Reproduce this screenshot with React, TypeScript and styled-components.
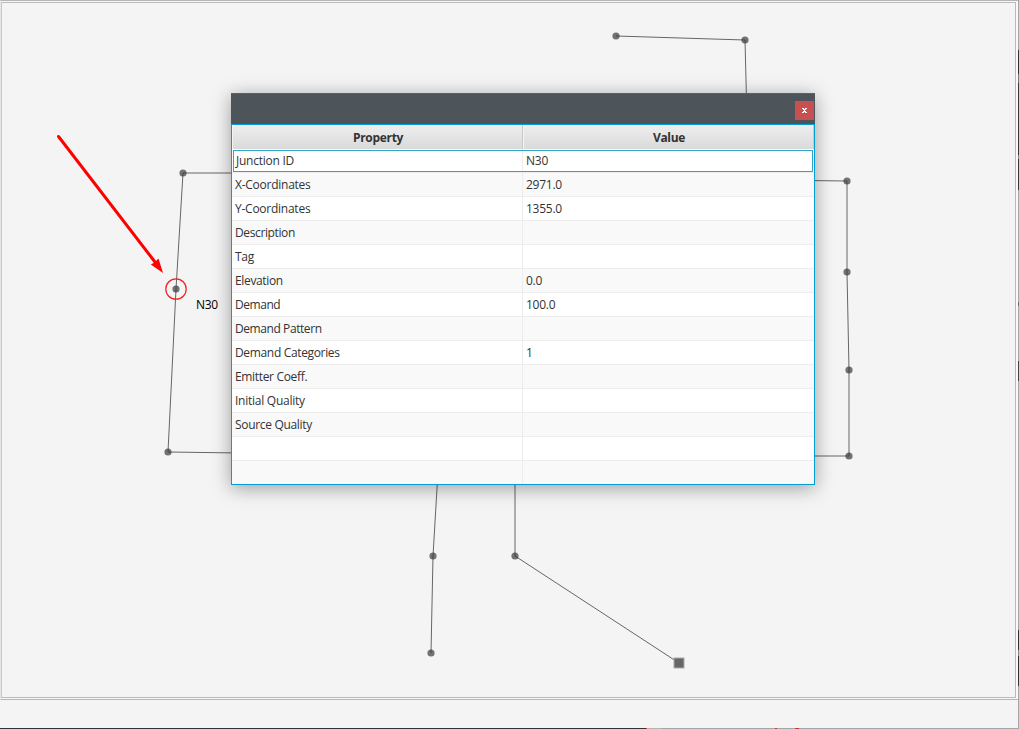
import React from "react";
import styled, { createGlobalStyle } from "styled-components";

const GlobalStyle = createGlobalStyle`
  * { box-sizing: border-box; }
  html, body { margin: 0; padding: 0; overflow: hidden; }
  body { background: #f4f4f4; font-family: "Open Sans", "Noto Sans", sans-serif; font-size: 12px; color: #333; }
`;

const Screen = styled.div`
  position: relative;
  width: 1019px;
  height: 729px;
  display: grid;
  grid-template-columns: 1fr 1px;
  grid-template-rows: 1fr 1px;
  background: #f4f4f4;
`;

const Workspace = styled.div`
  display: flex;
  flex-direction: column;
  min-width: 0;
`;

const CanvasFrame = styled.div`
  height: 700px;
  border-top: 1px solid #b5b5b5;
  border-bottom: 1px solid #b5b5b5;
  border-left: 1px solid #e6e6e6;
  padding: 1px 2px 1px 0;
  background: #f8f8f8;
`;

const Canvas = styled.div`
  height: 100%;
  border: 1px solid #bababa;
  border-left-color: #c8c8c8;
  background: #f4f4f4;
`;

const RightEdge = styled.div`
  background: linear-gradient(
    #a5a5a5 50px, #333 50px 74px, #777 74px 83px, #383838 83px 155px,
    #858585 155px 159px, #383838 159px 190px, #a5a5a5 190px 302px,
    #707070 302px 306px, #a5a5a5 306px 361px, #444 361px 381px,
    #a5a5a5 381px 630px, #333 630px 650px, #888 650px 656px,
    #333 656px 686px, #a5a5a5 686px
  );
`;

const BottomEdge = styled.div`
  grid-column: 1 / 3;
  background: linear-gradient(
    90deg, #333 646px, #d33 646px 647px, #b5b5b0 647px 661px, #a5a5a5 661px 775px,
    #c43b36 775px 777px, #a5a5a5 777px 795px, #c43b36 795px 799px, #a5a5a5 799px
  );
`;

const Network = styled.svg`
  position: absolute;
  inset: 0;
`;

const NodeLabel = styled.span`
  position: absolute;
  left: 196px;
  top: 297px;
  line-height: 16px;
  letter-spacing: -0.35px;
  color: #000;
`;

const Dialog = styled.section`
  position: absolute;
  left: 231px;
  top: 93px;
  width: 584px;
  height: 392px;
  display: flex;
  flex-direction: column;
  box-shadow: 0 3px 18px rgba(0, 0, 0, 0.36);
`;

const TitleBar = styled.header`
  height: 31px;
  flex: none;
  display: flex;
  justify-content: flex-end;
  padding: 7px 1px 0 0;
  background: #4d545a;
  border-top: 1px solid #596066;
`;

const CloseButton = styled.button`
  display: flex;
  align-items: center;
  justify-content: center;
  width: 19px;
  height: 19px;
  padding: 0;
  border: 0;
  background: #c75050;
`;

const Table = styled.div`
  flex: 1;
  min-height: 0;
  overflow: hidden;
  border: 1px solid #039ed3;
  background: #fff;
`;

const HeaderRow = styled.div`
  display: grid;
  grid-template-columns: 291px 291px;
  height: 24px;
`;

const HeaderCell = styled.div`
  border: 1px solid #c8c8c8;
  border-width: 0 1px 1px 0;
  box-shadow: inset 1px 1px #f4f4f4;
  background: linear-gradient(#eee, #d9d9d9);
  padding-left: 2px;
  text-align: center;
  font-weight: 700;
  line-height: 25px;
  letter-spacing: -0.3px;
`;

const Row = styled.div<{ $striped: boolean; $selected: boolean }>`
  position: relative;
  display: grid;
  grid-template-columns: 291px 291px;
  height: 24px;
  border-bottom: 1px solid #ededed;
  background: ${(p) => (p.$striped ? "#f9f9f9" : "#fff")};
  ${(p) =>
    p.$selected &&
    `&::after {
      content: "";
      position: absolute;
      inset: 1px 1px 0;
      border: 1px solid #30a5ce;
    }`}
`;

const Cell = styled.div<{ $spacing?: number; $indent?: number }>`
  padding-left: ${(p) => p.$indent ?? 3}px;
  border-right: 1px solid #ededed;
  line-height: 23px;
  letter-spacing: ${(p) => p.$spacing ?? -0.25}px;
  white-space: nowrap;
  &:last-child { border-right: 0; }
`;

const rows: { name: string; value?: string; spacing?: number; indent?: number }[] = [
  { name: "Junction ID", value: "N30", indent: 4 },
  { name: "X-Coordinates", value: "2971.0" },
  { name: "Y-Coordinates", value: "1355.0" },
  { name: "Description", spacing: -0.38 },
  { name: "Tag" },
  { name: "Elevation", value: "0.0", spacing: -0.35 },
  { name: "Demand", value: "100.0", spacing: -0.45 },
  { name: "Demand Pattern", spacing: -0.42 },
  { name: "Demand Categories", value: "1", spacing: -0.34 },
  { name: "Emitter Coeff.", spacing: -0.33 },
  { name: "Initial Quality" },
  { name: "Source Quality", spacing: -0.32 },
  { name: "" },
  { name: "" },
];

const pipes = [
  "616,36 745,40 746.5,100",
  "240,173 183,173 176,289 168,452 240,453",
  "806,180.5 847,181 847,272 849,370 849,456 806,456",
  "437.5,480 433,556 431,653",
  "515,480 515,556 679,663",
];

const junctions = [
  [616, 36], [745, 40], [183, 173], [176, 289], [168, 452], [847, 181],
  [847, 272], [849, 370], [849, 456], [433, 556], [431, 653], [515, 556],
];

export default function App() {
  return (
    <>
      <GlobalStyle />
      <Screen>
        <Workspace>
          <CanvasFrame>
            <Canvas />
          </CanvasFrame>
        </Workspace>
        <RightEdge />
        <BottomEdge />
        <Network width="1019" height="729">
          {pipes.map((p) => (
            <polyline key={p} points={p} fill="none" stroke="#666" />
          ))}
          {junctions.map(([x, y]) => (
            <circle key={`${x}-${y}`} cx={x} cy={y} r="3.6" fill="#333" fillOpacity="0.68" />
          ))}
          <rect x="674" y="658" width="10" height="10" fill="#666" stroke="#aaa" />
          <circle cx="176" cy="289" r="10.2" fill="none" stroke="#f02020" strokeWidth="1.2" />
          <path d="M58.5 136.5L155 262" stroke="#f00" strokeWidth="3" strokeLinecap="round" />
          <path d="M163 273L150.8 264.5L154.5 262.5L158.5 258.5Z" fill="#f00" />
        </Network>
        <NodeLabel>N30</NodeLabel>
        <Dialog>
          <TitleBar>
            <CloseButton aria-label="Close">
              <svg width="5" height="5" viewBox="0 0 5 5" shapeRendering="crispEdges">
                <path d="M0 0h2v1h1V0h2v1H4v1H3v1h1v1h1v1H3V4H2v1H0V4h1V3h1V2H1V1H0z" fill="#fff" />
              </svg>
            </CloseButton>
          </TitleBar>
          <Table>
            <HeaderRow>
              <HeaderCell>Property</HeaderCell>
              <HeaderCell>Value</HeaderCell>
            </HeaderRow>
            {rows.map((row, i) => (
              <Row key={i} $striped={i % 2 === 1} $selected={i === 0}>
                <Cell $spacing={row.spacing} $indent={row.indent}>{row.name}</Cell>
                <Cell>{row.value}</Cell>
              </Row>
            ))}
          </Table>
        </Dialog>
      </Screen>
    </>
  );
}
